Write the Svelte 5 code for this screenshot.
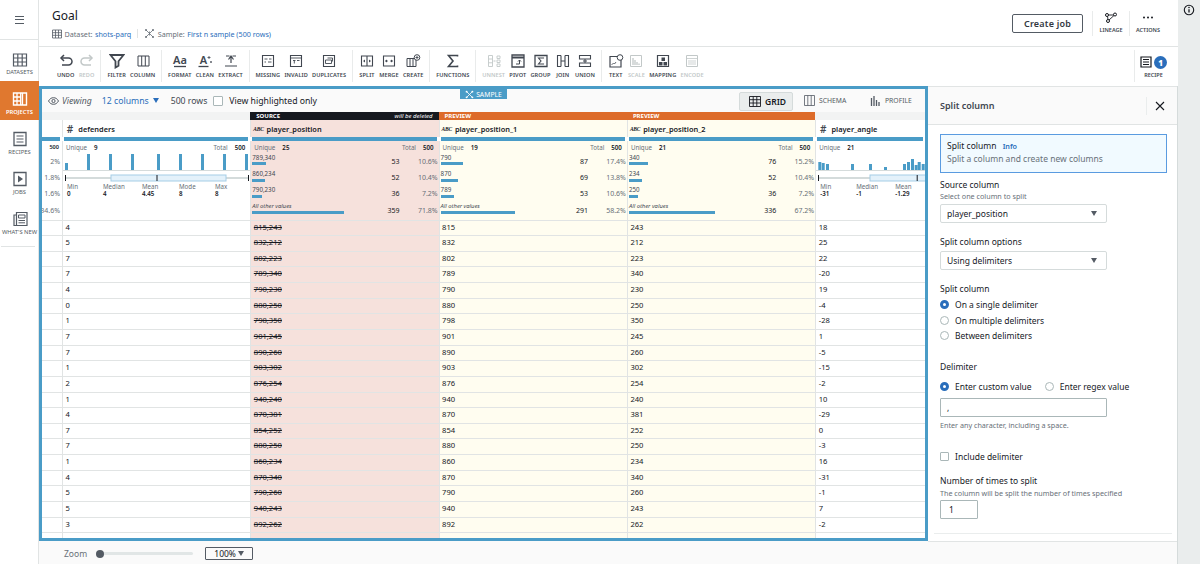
<script>
  const ic = {
    undo: `<path d="M3 5h7.500a3.500 3.500 0 0 1 0 7H4" fill="none" stroke="currentColor" stroke-width="1.500"/><path d="M6 2 3 5l3 3" fill="none" stroke="currentColor" stroke-width="1.500"/>`,
    redo: `<path d="M13 5H5.500a3.500 3.500 0 0 0 0 7H12" fill="none" stroke="currentColor" stroke-width="1.500"/><path d="m10 2 3 3-3 3" fill="none" stroke="currentColor" stroke-width="1.500"/>`,
    filter: `<path d="M1.500 2h13l-5 6.200v4.500L6.500 14.500V8.200z" fill="none" stroke="currentColor" stroke-width="1.800"/>`,
    column: `<path d="M3 3h11v10H3zM6.700 3v10M10.300 3v10" fill="none" stroke="currentColor" stroke-width="1"/>`,
    format: `<text x="8" y="11" text-anchor="middle" font-size="11" font-family="Noto Sans" font-weight="600" fill="currentColor">Aa</text><path d="M2 13.500h12" stroke="currentColor" stroke-width="1.300"/>`,
    clean: `<text x="6.500" y="11" text-anchor="middle" font-size="11" font-family="Noto Sans" font-weight="600" fill="currentColor">A</text><path d="M1.500 13.500h10" stroke="currentColor" stroke-width="1.300"/><path d="M12 3v3M10.500 4.500h3M14 8v2M13 9h2" stroke="currentColor" stroke-width=".8"/>`,
    extract: `<path d="M3 3h3.500M9.500 3H13M8 3v7M5.500 6.500 8 3l2.500 3.500M2 13h12" fill="none" stroke="currentColor" stroke-width="1.200"/>`,
    missing: `<path d="M2.500 2.500h11v11h-11z" fill="none" stroke="currentColor" stroke-width="1.100"/><path d="M4.500 6h3M9 6h2.500M4.500 9h1.500M8 9h3.500" stroke="currentColor" stroke-width=".9"/>`,
    invalid: `<path d="M2.500 2.500h11v11h-11z" fill="none" stroke="currentColor" stroke-width="1.100"/><path d="M2.500 5h11M5 7.500h2.500M9 7.500h2.500M6.300 7.500v3" stroke="currentColor" stroke-width=".9"/>`,
    duplicates: `<path d="M2.500 2.500h11v11h-11z" fill="none" stroke="currentColor" stroke-width="1.100"/><path d="M6.500 5h5v3.500M4.500 7h6v3.500h-6z" fill="none" stroke="currentColor" stroke-width=".9"/>`,
    split: `<path d="M2.500 3h11v10h-11zM8 3v10" fill="none" stroke="currentColor" stroke-width="1.100"/><path d="m4 8 2-1.500v3zM12 8l-2-1.500v3z" fill="currentColor"/>`,
    merge: `<path d="M2.500 3h11v10h-11z" fill="none" stroke="currentColor" stroke-width="1.100"/><path d="m7 8-2-1.500v3zM9 8l2-1.500v3z" fill="currentColor"/><path d="M4 8h2M10 8h2" stroke="currentColor"/>`,
    create: `<path d="M2 5.500h9v8H2zM5 5.500v8M8 5.500v8" fill="none" stroke="currentColor" stroke-width="1"/><circle cx="12" cy="4.500" r="2.800" fill="#fff" stroke="currentColor"/><path d="M12 3v3M10.500 4.500h3" stroke="currentColor" stroke-width=".9"/>`,
    sigma: `<path d="M12.500 3.500v-1h-9L8 8l-4.500 5.500h9v-1" fill="none" stroke="currentColor" stroke-width="1.600"/>`,
    unnest: `<path d="M2.500 2.500h4v11h-4zM2.500 6h4M2.500 9.800h4M11 3h3v2.500h-3zM11 7h3v2.500h-3zM11 11h3v2.500h-3z" fill="none" stroke="currentColor" stroke-width=".9"/><path d="M7.500 8h2" stroke="currentColor"/>`,
    pivot: `<path d="M2 2h12v12H2z" fill="none" stroke="currentColor" stroke-width="1.300"/><path d="M2 4.500h12" stroke="currentColor" stroke-width="2"/><path d="M6 11h3.500V7M8 8.500l1.500-1.500 1.500 1.500" fill="none" stroke="currentColor"/>`,
    group: `<path d="M2 2.500h12v11H2z" fill="none" stroke="currentColor" stroke-width="1.300"/><path d="M10.500 5.500V5h-5L8 8l-2.500 3h5v-.5" fill="none" stroke="currentColor" stroke-width="1.100"/>`,
    join: `<path d="M6 2.500H2.500v11H6M10 2.500h3.500v11H10M6 2.500v11M10 2.500v11" fill="none" stroke="currentColor" stroke-width="1.100"/><path d="M6 8h4" stroke="currentColor"/>`,
    union: `<path d="M2.500 2.500h11v3.500h-11zM2.500 10h11v3.500h-11z" fill="none" stroke="currentColor" stroke-width="1.100"/><path d="M8 6v4M6 8h4" stroke="currentColor"/>`,
    text: `<path d="M2 3.500h11v10.500H2z" fill="none" stroke="currentColor" stroke-width="1.200"/><path d="m3.500 12 2-2 1 1 1.500-2" fill="none" stroke="currentColor" stroke-width=".8"/><circle cx="12" cy="4.500" r="2.800" fill="#fff" stroke="currentColor"/>`,
    scale: `<path d="M2.500 2.500h11v11h-11z" fill="none" stroke="currentColor"/><path d="M5 5v7M7 7v5M9 9v3M11 10.500V12" stroke="currentColor" stroke-width="1.300"/>`,
    mapping: `<path d="M2.500 2.500h11v11h-11z" fill="none" stroke="currentColor" stroke-width="1.200"/><path d="M4 9h3.500v3.500H4zM8.500 9H12v3.500H8.500zM6.500 4.500H10V8H6.500z" fill="currentColor"/>`,
    encode: `<path d="M2.500 2.500h11v11h-11z" fill="none" stroke="currentColor"/><path d="M2.500 5.500h11M5 7v5M7 7v5M9 7v5M11 7v5" stroke="currentColor" stroke-width=".8"/>`
  };
  const groups = [
    [['undo','UNDO'],['redo','REDO',1]],
    [['filter','FILTER'],['column','COLUMN']],
    [['format','FORMAT'],['clean','CLEAN'],['extract','EXTRACT']],
    [['missing','MISSING'],['invalid','INVALID'],['duplicates','DUPLICATES']],
    [['split','SPLIT'],['merge','MERGE'],['create','CREATE']],
    [['sigma','FUNCTIONS']],
    [['unnest','UNNEST',1],['pivot','PIVOT'],['group','GROUP'],['join','JOIN'],['union','UNION']],
    [['text','TEXT'],['scale','SCALE',1],['mapping','MAPPING'],['encode','ENCODE',1]]
  ];
  const nav = [
    ['DATASETS', `<path d="M2.500 3h13v12h-13zM2.500 7h13M2.500 11h13M6.800 3v12M11.200 3v12" fill="none" stroke="currentColor" stroke-width="1.200"/>`],
    ['PROJECTS', `<path d="M2.500 3h13v12h-13z" fill="none" stroke="currentColor" stroke-width="1.400"/><path d="M2.500 7h7M2.500 11h7M6 3v12M9.700 3v12M11.500 3v12" fill="none" stroke="currentColor" stroke-width="1.300"/>`],
    ['RECIPES', `<path d="M3 2.500h12v13H3z" fill="none" stroke="currentColor" stroke-width="1.300"/><path d="M5.500 6h7M5.500 9h7M5.500 12h7" stroke="currentColor" stroke-width="1.200"/>`],
    ['JOBS', `<path d="M3 2.500h12v13H3z" fill="none" stroke="currentColor" stroke-width="1.300"/><path d="m7 5.500 5 3.500-5 3.500z" fill="currentColor"/>`],
    ["WHAT'S NEW", `<path d="M5.500 2.500h10.500v13H5.500zM5.500 5H3v10.500h3" fill="none" stroke="currentColor" stroke-width="1.200"/><path d="M7.500 5h6.500v3H7.500zM7.500 10.500h6.500M7.500 12.800h6.500" fill="none" stroke="currentColor"/>`]
  ];

  const defs = [4,5,7,7,4,0,1,7,7,1,2,1,4,7,7,1,4,5,5,3];
  const pos = ['815,243','832,212','802,223','789,340','790,230','880,250','798,350','901,245','890,260','903,302','876,254','940,240','870,381','854,252','880,250','860,234','870,340','790,260','940,243','892,262'];
  const ang = [18,25,22,-20,19,-4,-28,1,-5,-15,-2,10,-29,0,-3,16,-31,-1,7,-2];

  const columns = [
    { name:'defenders', type:'num', unique:9, total:500, rows:defs.map(String),
      hist:[[2,7],[24,16],[46,16],[68,16],[94,16],[116,16],[138,16],[160,16],[182,16]], box:[48,163,93.5], wend:185,
      stats:[['Min','0'],['Median','4'],['Mean','4.45'],['Mode','8'],['Max','8']] },
    { name:'player_position', type:'abc', tone:'src', banner:'SOURCE', note:'will be deleted', unique:25, total:500, rows:pos,
      top:[['789,340',14,53,'10.6%'],['860,234',13,52,'10.4%'],['790,230',10,36,'7.2%'],['All other values',92,359,'71.8%']] },
    { name:'player_position_1', type:'abc', tone:'pre', banner:'PREVIEW', unique:19, total:500, rows:pos.map(s=>s.split(',')[0]),
      top:[['790',22,87,'17.4%'],['870',17,69,'13.8%'],['789',13.5,53,'10.6%'],['All other values',74,291,'58.2%']] },
    { name:'player_position_2', type:'abc', tone:'pre', banner:'PREVIEW', unique:21, total:500, rows:pos.map(s=>s.split(',')[1]),
      top:[['340',19,76,'15.2%'],['234',13,52,'10.4%'],['250',9,36,'7.2%'],['All other values',86,336,'67.2%']] },
    { name:'player_angle', type:'num', unique:21, rows:ang.map(String),
      hist:[[2.3,8],[5.7,7],[10,6],[35,6],[53,6],[68,3],[87,6],[91,8],[95,11],[98.7,5],[101.7,8],[105.7,6]], box:[54,130,100.7], wend:140,
      stats:[['Min','-31'],['Median','-1'],['Mean','-1.29']] }
  ];
  const stub = ['2%','1.8%','1.6%','34.6%'];
  const fillerRows = Array(21).fill(0);
</script>

{#snippet svgIcon(markup, size)}
  <svg class="ico" width={size} height={size} viewBox={`0 0 ${size} ${size}`} aria-hidden="true">{@html markup}</svg>
{/snippet}

<div class="app">
  <aside class="nav">
    <div class="burger"><span></span><span></span><span></span></div>
    {#each nav as [label, markup], i}
      <div class="navitem" class:active={i===1}>
        {@render svgIcon(markup, 18)}
        <span>{label}</span>
      </div>
    {/each}
    <div class="navend"></div>
  </aside>

  <div class="main">
    <header class="top">
      <div class="titles">
        <h1>Goal</h1>
        <div class="meta">
          <svg width="10" height="10" viewBox="0 0 10 10"><path d="M.5 1h9v8h-9zM.5 3.700h9M.5 6.300h9M3.500 1v8M6.500 1v8" fill="none" stroke="#545b64" stroke-width=".8"/></svg>
          <span class="mut">Dataset:</span> <a href="#a">shots-parq</a>
          <i class="vsep"></i>
          <svg width="11" height="11" viewBox="0 0 11 11"><path d="m2 2 7 7M9 2 2 9M5.500 3.500v4" stroke="#687078" stroke-width=".8"/><circle cx="2" cy="2" r="1" fill="#687078"/><circle cx="9" cy="2" r="1" fill="#687078"/><circle cx="2" cy="9" r="1" fill="#687078"/><circle cx="9" cy="9" r="1" fill="#687078"/></svg>
          <span class="mut">Sample:</span> <a href="#a">First n sample (500 rows)</a>
        </div>
      </div>
      <div class="topright">
        <button class="create">Create job</button>
        <div class="topbtn">
          <svg width="12" height="11" viewBox="0 0 12 11"><circle cx="2" cy="3" r="1.500" fill="none" stroke="#16191f"/><circle cx="10" cy="2.500" r="1.500" fill="none" stroke="#16191f"/><circle cx="3" cy="9" r="1.500" fill="none" stroke="#16191f"/><path d="M3.500 3h5M2.600 4.500l.3 3M4 8l5-4.500" stroke="#16191f" stroke-width=".9" fill="none"/></svg>
          <span>LINEAGE</span>
        </div>
        <div class="topbtn">
          <svg width="12" height="11" viewBox="0 0 12 11"><circle cx="2" cy="5.500" r="1" fill="#16191f"/><circle cx="6" cy="5.500" r="1" fill="#16191f"/><circle cx="10" cy="5.500" r="1" fill="#16191f"/></svg>
          <span>ACTIONS</span>
        </div>
      </div>
    </header>

    <div class="toolbar">
      <div class="tools">
        {#each groups as grp}
          <div class="group">
            {#each grp as [k, label, off]}
              <div class="tool" class:off>
                {@render svgIcon(ic[k], 16)}
                <span>{label}</span>
              </div>
            {/each}
          </div>
        {/each}
      </div>
      <div class="recipe">
        <div class="recipeicons">
          <svg width="12" height="12" viewBox="0 0 12 12"><path d="M1 1h10v10H1z" fill="none" stroke="#16191f" stroke-width="1.200"/><path d="M3 3.500h6M3 6h6M3 8.500h6" stroke="#16191f"/></svg>
          <b>1</b>
        </div>
        <span>RECIPE</span>
      </div>
    </div>

    <div class="work">
      <div class="left">
        <section class="frame">
          <div class="sample">
            <svg width="9" height="9" viewBox="0 0 11 11"><path d="m2 2 7 7M9 2 2 9" stroke="#fff" stroke-width="1"/><circle cx="2" cy="2" r="1.200" fill="#fff"/><circle cx="9" cy="2" r="1.200" fill="#fff"/><circle cx="2" cy="9" r="1.200" fill="#fff"/><circle cx="9" cy="9" r="1.200" fill="#fff"/></svg>
            SAMPLE
          </div>
          <div class="viewbar">
            <svg width="11" height="8" viewBox="0 0 11 8"><path d="M.5 4C2 1.500 3.500.7 5.500.7S9 1.500 10.500 4C9 6.500 7.500 7.300 5.500 7.300S2 6.500.5 4z" fill="none" stroke="#545b64"/><circle cx="5.500" cy="4" r="1.600" fill="none" stroke="#545b64"/></svg>
            <em>Viewing</em>
            <span class="cols">12 columns <i class="tri blue"></i></span>
            <span class="rowsn">500 rows</span>
            <i class="box"></i>
            <span class="vh">View highlighted only</span>
            <div class="tabs">
              <div class="tab sel">
                <svg width="12" height="11" viewBox="0 0 12 11"><path d="M.5.500h11v10H.5zM.5 3.700h11M.5 7h11M4.200.500v10M7.800.500v10" fill="none" stroke="#16191f" stroke-width=".9"/></svg>
                GRID
              </div>
              <div class="tab">
                <svg width="11" height="11" viewBox="0 0 11 11"><path d="M.5.500h10v10H.5zM3.800.500v10M7.200.500v10" fill="none" stroke="#545b64" stroke-width=".8"/></svg>
                SCHEMA
              </div>
              <div class="tab">
                <svg width="11" height="11" viewBox="0 0 11 11"><path d="M1.500 3v8M4 1v10M6.500 5v6M9 7v4" stroke="#545b64" stroke-width="1.300"/></svg>
                PROFILE
              </div>
            </div>
          </div>

          <div class="table">
            <div class="col stub">
              <div class="banner"></div>
              <div class="head"></div>
              <div class="line"></div>
              <div class="stats">
                <div class="sumrow end"><b>500</b></div>
                {#each stub as s}<div class="toprow stubrow"><span class="pct">{s}</span></div>{/each}
              </div>
              {#each fillerRows as _}<div class="cell"></div>{/each}
            </div>

            {#each columns as c}
              <div class="col {c.tone ?? ''}">
                <div class="banner {c.tone ?? ''}">
                  {#if c.banner}<b>{c.banner}</b>{/if}
                  {#if c.note}<em>{c.note}</em>{/if}
                </div>
                <div class="head">
                  {#if c.type==='num'}<span class="hash">#</span>{:else}<span class="abc">ABC</span>{/if}
                  <b>{c.name}</b>
                </div>
                <div class="line"></div>
                <div class="stats">
                  <div class="sumrow">
                    <span>Unique</span><b>{c.unique}</b>
                    {#if c.total}<span class="push">Total</span><b>{c.total}</b>{/if}
                  </div>
                  {#if c.type==='num'}
                    <svg class="plot" height="30" width="100%">
                      {#each c.hist as [x,h]}<rect x={x} y={17-h} width="3" height={h} fill="#4a9cc7"/>{/each}
                      <rect x="0" y="17" width="100%" height="1" fill="#d5dbdb"/>
                      <rect x="2" y="24.500" width={c.wend-2} height="1" fill="#aab7b8"/>
                      <rect x="2" y="22" width="1" height="6" fill="#16191f"/>
                      {#if c.name==='defenders'}<rect x={c.wend} y="22" width="1" height="6" fill="#16191f"/>{/if}
                      <rect x={c.box[0]} y="22" width={c.box[1]-c.box[0]} height="6" fill="#e3f1fa" stroke="#a5cde6"/>
                      <rect x={c.box[2]} y="22" width="1" height="6" fill="#16191f"/>
                    </svg>
                    <div class="five">
                      {#each c.stats as [k,v]}<div><span>{k}</span><b>{v}</b></div>{/each}
                    </div>
                  {:else}
                    {#each c.top as [label,w,n,p]}
                      <div class="toprow">
                        <div class="lab">
                          <span class:it={label.startsWith('All')}>{label}</span>
                          <i class="bar" style="width:{w}px"></i>
                        </div>
                        <span class="n">{n}</span>
                        <span class="pct">{p}</span>
                      </div>
                    {/each}
                  {/if}
                </div>
                {#each c.rows as r}
                  <div class="cell" class:strike={c.tone==='src'}>{r}</div>
                {/each}
                <div class="cell"></div>
              </div>
            {/each}
          </div>
        </section>

        <footer class="zoom">
          <span class="zl">Zoom</span>
          <div class="slider"><i></i></div>
          <div class="pctbtn">100% <i class="tri"></i></div>
        </footer>
      </div>

      <aside class="panel">
        <div class="phead">
          <h2>Split column</h2>
          <i class="psep"></i>
          <svg width="10" height="10" viewBox="0 0 10 10"><path d="m1 1 8 8M9 1 1 9" stroke="#16191f" stroke-width="1.100"/></svg>
        </div>
        <div class="pbody">
          <div class="infobox">
            <div class="ibt">Split column <a href="#a">Info</a></div>
            <div class="ibs">Split a column and create new columns</div>
          </div>
          <div class="lb f1">Source column</div>
          <div class="hint">Select one column to split</div>
          <div class="sel">player_position <i class="tri"></i></div>
          <div class="lb f2">Split column options</div>
          <div class="sel">Using delimiters <i class="tri"></i></div>
          <div class="lb f3">Split column</div>
          <div class="radios">
            <div class="radio"><i class="rd on"></i>On a single delimiter</div>
            <div class="radio"><i class="rd"></i>On multiple delimiters</div>
            <div class="radio"><i class="rd"></i>Between delimiters</div>
          </div>
          <div class="lb f4">Delimiter</div>
          <div class="inline">
            <div class="radio"><i class="rd on"></i>Enter custom value</div>
            <div class="radio"><i class="rd"></i>Enter regex value</div>
          </div>
          <div class="inp">,</div>
          <div class="hint h5">Enter any character, including a space.</div>
          <div class="radio chk"><i class="cb"></i>Include delimiter</div>
          <div class="lb f6">Number of times to split</div>
          <div class="hint h6">The column will be split the number of times specified</div>
          <div class="inp small">1</div>
          <div class="rule"></div>
        </div>
        <div class="pfoot"></div>
      </aside>
    </div>
  </div>

  <div class="info">
    <svg width="12" height="12" viewBox="0 0 12 12"><circle cx="6" cy="6" r="4.700" fill="none" stroke="#16191f" stroke-width="1.100"/><path d="M6 5.300v3.200" stroke="#16191f" stroke-width="1.300"/><circle cx="6" cy="3.500" r=".8" fill="#16191f"/></svg>
  </div>
</div>

<style>
  :global(body) { margin: 0; background: #fff; }
  .app { display: flex; width: 1200px; height: 564px; overflow: hidden; font-family: "Noto Sans", "Open Sans", sans-serif; color: #16191f; background: #fff; font-size: 8.5px; }
  a { color: #2a6ebb; text-decoration: none; }
  svg { flex: none; display: block; }
  i { font-style: normal; }

  .nav { width: 39px; flex: none; display: flex; flex-direction: column; box-shadow: inset -1px 0 #e1e4e4; }
  .burger { height: 40px; flex: none; display: flex; flex-direction: column; gap: 2.5px; align-items: center; justify-content: center; border-bottom: 1px solid #e1e4e4; box-sizing: border-box; }
  .burger span { width: 9px; height: 1px; background: #545b64; }
  .navitem { height: 40px; flex: none; display: flex; flex-direction: column; align-items: center; gap: 0; color: #545b64; box-sizing: border-box; padding-top: 10px; }
  .burger + .navitem { height: 41px; padding-top: 11px; }
  .navitem span { font-size: 5.8px; line-height: 8px; white-space: nowrap; margin-top: -.5px; }
  .burger + .navitem span { margin-top: -1.5px; }
  .navitem.active { background: #e0782f; color: #fff; font-weight: 600; height: 39px; padding-top: 9px; }
  .navend { width: 34px; margin: 6px 0 0 1px; border-top: 1px solid #e1e4e4; }

  .main { flex: 1; min-width: 0; display: flex; flex-direction: column; }
  .top { height: 47px; flex: none; box-sizing: border-box; border-bottom: 1px solid #e1e4e4; display: flex; justify-content: space-between; padding-left: 13px; }
  h1 { margin: 0; font-size: 12px; font-weight: 400; line-height: 14px; padding-top: 9px; }
  .meta { display: flex; align-items: center; gap: 2.5px; font-size: 7.2px; margin-top: 5px; white-space: nowrap; }
  .mut { color: #687078; }
  .vsep { width: 1px; height: 9px; background: #e1e4e4; margin: 0 3.5px; }
  .topright { display: flex; align-items: center; padding-right: 12px; }
  .create { width: 71px; height: 19px; margin-right: 9px; background: #fff; border: 1px solid #545b64; border-radius: 2px; font: 600 9px "Noto Sans", sans-serif; color: #32383f; padding: 0; letter-spacing: .2px; }
  .topbtn { width: 37px; height: 25px; box-sizing: border-box; display: flex; flex-direction: column; align-items: center; justify-content: center; gap: 3px; border-left: 1px solid #e9ebeb; font-size: 5.5px; font-weight: 600; color: #414750; }

  .toolbar { height: 39px; flex: none; display: flex; justify-content: space-between; box-sizing: border-box; padding: 3px 6px 0 11px; }
  .tools { display: flex; }
  .group { display: flex; gap: 4.2px; padding: 0 5.7px 0 6px; height: 32px; border-left: 1px solid #e9ebeb; }
  .group:first-child { border-left: 0; padding-left: 7px; }
  .tool { display: flex; flex-direction: column; align-items: center; gap: 2px; font-size: 5.6px; font-weight: 600; letter-spacing: .1px; color: #414750; white-space: nowrap; padding-top: 2.5px; }
  .tool.off { color: #c2c8c8; }
  .recipe { height: 32px; border-left: 1px solid #e9ebeb; display: flex; flex-direction: column; align-items: center; font-size: 5.5px; font-weight: 600; color: #414750; gap: 2px; padding-top: 5px; box-sizing: border-box; width: 38px; }
  .recipeicons { display: flex; align-items: center; gap: 2px; height: 14px; }
  .recipeicons b { width: 13px; height: 13px; border-radius: 50%; background: #2a6ebb; color: #fff; font-size: 8px; display: flex; align-items: center; justify-content: center; }

  .work { flex: 1; min-height: 0; display: flex; }
  .left { width: 889px; flex: none; display: flex; flex-direction: column; }
  .frame { position: relative; height: 455px; flex: none; box-sizing: border-box; border: 3px solid #4a9cc7; overflow: hidden; background: #fff; }
  .sample { position: absolute; left: 418px; top: 0; width: 47px; height: 10px; background: #4a9cc7; color: #fff; font-size: 6.8px; display: flex; align-items: center; justify-content: center; gap: 2px; z-index: 2; }
  .viewbar { height: 23px; background: #fafafa; display: flex; align-items: center; padding-left: 6px; font-size: 8.7px; box-sizing: border-box; white-space: nowrap; }
  .viewbar em { color: #545b64; margin-left: 3px; }
  .cols { color: #2a6ebb; margin-left: 10px; display: flex; align-items: center; gap: 4px; }
  .rowsn { margin-left: 12px; color: #414750; }
  .box { width: 8px; height: 8px; border: 1px solid #aab7b8; border-radius: 1px; margin-left: 6px; background: #fff; }
  .vh { margin-left: 6px; }
  .tabs { margin-left: auto; align-self: stretch; display: flex; }
  .tab { display: flex; align-items: center; gap: 4px; padding: 0 0 0 11px; font-size: 6.8px; color: #545b64; width: 66px; box-sizing: border-box; }
  .tab.sel { width: 54px; padding-left: 9px; background: #eaeded; border-left: 1px solid #d5dbdb; border-right: 1px solid #d5dbdb; color: #16191f; font-weight: 600; }
  .tri { display: inline-block; width: 0; height: 0; border-left: 3.5px solid transparent; border-right: 3.5px solid transparent; border-top: 5px solid #545b64; }
  .tri.blue { border-top-color: #2a6ebb; }

  .table { display: grid; grid-template-columns: 20px repeat(4, 188.3px) 1fr; }
  .col { min-width: 0; overflow: hidden; }
  .banner { height: 8px; background: #f2f3f3; display: flex; justify-content: space-between; align-items: center; padding: 0 6px; font-size: 6px; color: #fff; line-height: 8px; }
  .banner.src { background: #16191f; }
  .banner.pre { background: #dd6b2a; }
  .head { height: 17px; display: flex; align-items: center; gap: 3.3px; padding-left: 2px; white-space: nowrap; background: #fff; box-sizing: border-box; border-left: 1px solid #e1e4e4; }
  .head b { font-size: 7.4px; font-weight: 600; }
  .hash { font-size: 10px; color: #414750; font-weight: 600; width: 10px; text-align: center; }
  .abc { font-family: "Liberation Serif", serif; font-size: 5.5px; letter-spacing: -.2px; font-style: italic; font-weight: 700; color: #16191f; width: 10px; }
  .line { height: 3.5px; background: #4a9cc7; margin: 0 2px; }
  .stub .head { border: 0; }
  .stub .line { margin-left: 0; }
  .stats { height: 79px; box-sizing: border-box; padding-top: 1px; border-left: 1px solid #e1e4e4; }
  .stub .stats { border: 0; }
  .sumrow { height: 11.5px; display: flex; align-items: center; gap: 7px; padding: 0 5px 0 3px; font-size: 6.2px; color: #687078; white-space: nowrap; }
  .sumrow b { color: #16191f; font-weight: 600; }
  .push { margin-left: auto; }
  .end { justify-content: flex-end; padding-right: 3px; font-size: 5.6px; }
  .toprow { height: 16.3px; display: flex; align-items: center; padding-right: 1px; white-space: nowrap; }
  .stubrow { justify-content: flex-end; padding-right: 2px; }
  .lab { flex: 1; align-self: flex-start; display: flex; flex-direction: column; margin-top: .7px; padding-left: 1px; font-size: 6.2px; line-height: 7px; color: #414750; gap: 1.8px; }
  .it { font-style: italic; font-size: 5.8px; }
  .bar { display: block; height: 3px; background: #4a9cc7; }
  .n { font-size: 7px; color: #16191f; margin-right: 14px; }
  .pct { font-size: 7px; color: #687078; width: 24px; text-align: right; }
  .stubrow .pct { width: auto; }
  .five { display: grid; grid-template-columns: 36px 39px 37px 36px 1fr; padding-left: 4px; font-size: 6.2px; line-height: 7px; }
  .five div { display: flex; flex-direction: column; }
  .five span { color: #687078; }
  .five b { font-weight: 600; }

  .cell { height: 15.65px; box-sizing: border-box; border-top: 1px solid #e1e4e4; border-left: 1px solid #e1e4e4; padding-left: 2.5px; font-size: 7.6px; line-height: 13.5px; color: #16191f; }
  .stub .cell { border-left: 0; }
  .strike { text-decoration: line-through; }
  .src .stats, .src .head, .src .cell { background: #f6e1dc; }
  .pre .stats, .pre .head, .pre .cell { background: #fffdf0; }

  .panel { flex: 1; min-width: 0; display: flex; flex-direction: column; border-right: 1px solid #d5dbdb; }
  .phead { height: 39px; flex: none; box-sizing: border-box; background: #fafafa; border-bottom: 1px solid #e1e4e4; border-top: 1px solid #e1e4e4; display: flex; align-items: center; padding: 0 12px 0 12px; }
  h2 { margin: 0; flex: 1; font-size: 9px; font-weight: 600; color: #414750; }
  .psep { width: 1px; height: 18px; background: #eaeded; margin-right: 8px; }
  .pbody { height: 416px; box-sizing: border-box; padding: 9px 6px 0 12px; flex: none; }
  .infobox { width: 227px; height: 39px; box-sizing: border-box; border: 1px solid #5a9be0; background: #f1faff; padding: 5px 6px; font-size: 8.5px; }
  .ibt { line-height: 12px; }
  .ibt a { font-size: 7.2px; font-weight: 600; margin-left: 4px; }
  .ibs { line-height: 13px; color: #687078; }
  .lb { font-size: 8.5px; line-height: 12px; color: #16191f; }
  .hint { font-size: 7.2px; color: #687078; line-height: 10px; white-space: nowrap; }
  .f1 { margin-top: 6px; }
  .sel { width: 167px; height: 19px; box-sizing: border-box; border: 1px solid #d5dbdb; border-bottom-width: 1.5px; border-radius: 2px; background: #fff; display: flex; align-items: center; justify-content: space-between; padding: 0 9px 0 6px; margin-top: 3px; font-size: 8.5px; }
  .f2, .f3 { margin-top: 13px; }
  .radios { margin-top: 2px; display: flex; flex-direction: column; }
  .radio { display: flex; align-items: center; gap: 6px; height: 15.6px; font-size: 8.5px; white-space: nowrap; }
  .rd { width: 7px; height: 7px; border: 1px solid #aab7b8; border-radius: 50%; background: #fff; flex: none; }
  .rd.on { border: 3px solid #2a6ebb; width: 3px; height: 3px; }
  .f4 { margin-top: 17px; }
  .inline { display: flex; gap: 13px; margin-top: 6px; }
  .inp { width: 167px; height: 19px; box-sizing: border-box; border: 1px solid #aab7b8; margin-top: 4px; padding: 0 6px; line-height: 17px; font-size: 8.5px; border-radius: 1px; }
  .h5 { margin-top: 3px; }
  .chk { margin-top: 18px; }
  .cb { width: 7px; height: 7px; border: 1px solid #aab7b8; border-radius: 1px; flex: none; }
  .f6 { margin-top: 11px; }
  .h6 { margin-top: 1px; }
  .small { width: 38px; margin-top: 2px; padding-left: 8px; }
  .rule { margin: 14px 0 0 -6px; width: 238px; border-top: 1px solid #eaeded; }
  .pfoot { flex: 1; background: #fafafa; border-top: 1px solid #e1e4e4; }

  .zoom { flex: 1; box-sizing: border-box; background: #fafafa; display: flex; align-items: center; padding: 2px 0 0 25px; font-size: 8.5px; }
  .zl { color: #687078; }
  .slider { width: 97px; height: 3px; margin-left: 9px; background: #e1e6e6; border-radius: 2px; position: relative; }
  .slider i { position: absolute; left: 0; top: -2.5px; width: 8px; height: 8px; border-radius: 50%; background: #545b64; }
  .pctbtn { margin-left: 12px; width: 48px; height: 13px; box-sizing: border-box; border: 1px solid #545b64; border-radius: 1px; display: flex; align-items: center; justify-content: center; gap: 2px; }

  .info { width: 22px; flex: none; background: #eaeded; display: flex; justify-content: center; padding-top: 4px; box-sizing: border-box; }
</style>
